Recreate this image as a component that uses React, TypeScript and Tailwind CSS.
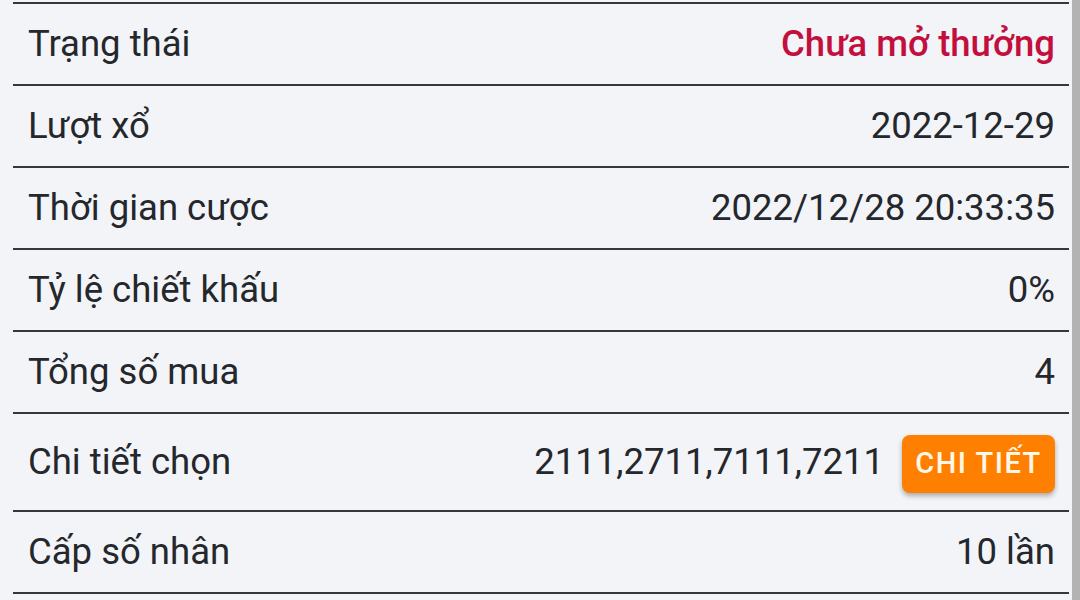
import React from "react";

const ROWS: { label: string; value: string; accent?: boolean; button?: boolean }[] = [
  { label: "Trạng thái", value: "Chưa mở thưởng", accent: true },
  { label: "Lượt xổ", value: "2022-12-29" },
  { label: "Thời gian cược", value: "2022/12/28 20:33:35" },
  { label: "Tỷ lệ chiết khấu", value: "0%" },
  { label: "Tổng số mua", value: "4" },
  { label: "Chi tiết chọn", value: "2111,2711,7111,7211", button: true },
  { label: "Cấp số nhân", value: "10 lần" },
];

export default function App() {
  return (
    <div
      className="flex h-[600px] w-[1080px] overflow-hidden bg-[#f3f4f8] text-[#24272c]"
      style={{ fontFamily: "Roboto, 'Noto Sans', sans-serif" }}
    >
      <div className="flex-1 pl-[13px] pr-[3px] pt-[2px]">
        <div className="border-t-2 border-[#35373b]">
          {ROWS.map((row) => (
            <div
              key={row.label}
              className={`flex items-center justify-between border-b-2 border-[#35373b] pl-[15px] pr-[14px] ${
                row.button ? "h-[98px]" : "h-[82px]"
              }`}
            >
              <span className="text-[36.5px] leading-none">{row.label}</span>
              <div className="flex items-center gap-[18px]">
                <span
                  className={`text-[36.5px] leading-none ${
                    row.accent ? "font-medium text-[#c20f3e]" : ""
                  }`}
                >
                  {row.value}
                </span>
                {row.button && (
                  <button className="mt-[3px] flex h-[58px] w-[153px] items-center justify-center rounded-[8px] bg-[#ff7f00] text-[29px] font-medium tracking-[1.5px] text-[#fff8e8] shadow-[0_3px_5px_rgba(0,0,0,0.3)]">
                    CHI TIẾT
                  </button>
                )}
              </div>
            </div>
          ))}
        </div>
      </div>
      <div className="w-[8px] bg-[#b3b3b3]" />
    </div>
  );
}
